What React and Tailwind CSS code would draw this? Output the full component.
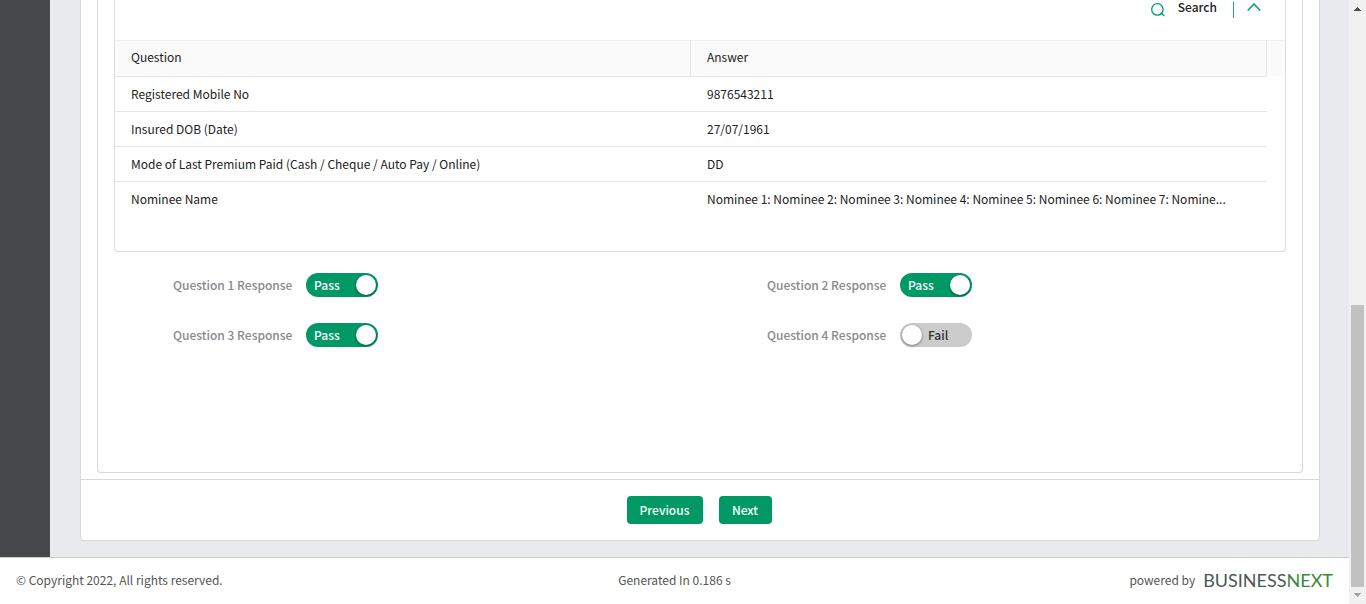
import { useState } from "react";

const rows = [
  ["Registered Mobile No", "9876543211"],
  ["Insured DOB (Date)", "27/07/1961"],
  ["Mode of Last Premium Paid (Cash / Cheque / Auto Pay / Online)", "DD"],
  [
    "Nominee Name",
    "Nominee 1: Nominee 2: Nominee 3: Nominee 4: Nominee 5: Nominee 6: Nominee 7: Nomine...",
  ],
];

const responses = [
  { id: 1, pass: true },
  { id: 2, pass: true },
  { id: 3, pass: true },
  { id: 4, pass: false },
];

function ResponseToggle({ id, pass }) {
  const [on, setOn] = useState(pass);
  const inputId = `question-${id}`;
  return (
    <div className="flex h-6 items-center gap-3 pl-[59px]">
      <label htmlFor={inputId} className="w-[121px] whitespace-nowrap font-medium text-[#8a8a8a]">
        Question {id} Response
      </label>
      <label
        className={
          on
            ? "relative flex h-6 w-[72px] cursor-pointer items-center rounded-full bg-[#009966] pl-2 font-medium text-white"
            : "relative flex h-6 w-[72px] cursor-pointer items-center rounded-full bg-[#cccccc] pl-7 font-medium text-[#333333]"
        }
      >
        <input
          id={inputId}
          type="checkbox"
          role="switch"
          checked={on}
          onChange={() => setOn(!on)}
          className="absolute inset-0 cursor-pointer appearance-none rounded-full"
        />
        <span>{on ? "Pass" : "Fail"}</span>
        <span
          className={
            on
              ? "pointer-events-none absolute top-0.5 right-0.5 size-5 rounded-full bg-white shadow-[0_1px_3px_rgba(0,0,0,0.45)]"
              : "pointer-events-none absolute top-0.5 left-0.5 size-5 rounded-full bg-white shadow-[0_1px_3px_rgba(0,0,0,0.45)]"
          }
        />
      </label>
    </div>
  );
}

function SearchBar() {
  return (
    <div className="flex h-10 items-start justify-end pr-[23px]">
      <button type="button" className="flex items-start gap-3 font-medium text-[#222222]">
        <svg className="mt-0.5 size-4" viewBox="0 0 16 16" fill="none" stroke="#009966" strokeWidth="1.3">
          <circle cx="7.4" cy="7.4" r="5.7" />
          <path d="M10.6 10.7 L14.3 13.9" />
        </svg>
        <span className="-mt-[3px]">Search</span>
      </button>
      <span className="mt-0.5 ml-4 h-4 w-px bg-[#2f9f6d]" />
      <button type="button" aria-label="Collapse" className="mt-0.5 ml-3 flex">
        <svg className="h-[10px] w-4" viewBox="0 0 16 10" fill="none" stroke="#009966" strokeWidth="1.5">
          <path d="M1.7 8.5 L8 2 L14.3 8.5" />
        </svg>
      </button>
    </div>
  );
}

function QuestionTable() {
  return (
    <section className="rounded-b border border-t-0 border-[#dcdcdc] pb-[34px]">
      <SearchBar />
      <div className="bg-[linear-gradient(#fafafa,#fafafa)] bg-[length:100%_36px] bg-no-repeat pr-[18px] shadow-[inset_0_1px_#efefef]">
        <table className="w-full table-fixed border-separate border-spacing-0 text-left text-[#222222]">
          <thead>
            <tr className="h-[37px]">
              <th className="border-r border-b border-[#e6e6e6] px-4 pb-0.5 font-normal">Question</th>
              <th className="border-r border-b border-[#e6e6e6] px-4 pb-0.5 font-normal">Answer</th>
            </tr>
          </thead>
          <tbody className="bg-white">
            {rows.map(([question, answer]) => (
              <tr key={question} className="group h-[35px]">
                <td className="truncate border-b border-[#e6e6e6] px-4 group-last:border-transparent">{question}</td>
                <td className="truncate border-b border-[#e6e6e6] px-4 group-last:border-transparent">{answer}</td>
              </tr>
            ))}
          </tbody>
        </table>
      </div>
    </section>
  );
}

function Scrollbar() {
  return (
    <div aria-hidden="true" className="flex w-[17px] shrink-0 flex-col items-center bg-[#f1f1f1] pt-[7px] pb-[7px]">
      <svg className="h-1 w-[7px] shrink-0" viewBox="0 0 7 4" fill="#505050" shapeRendering="crispEdges">
        <path d="M0 4 L3.5 0 L7 4 Z" />
      </svg>
      <div className="grow" />
      <div className="mb-[6px] h-[282px] w-[13px] bg-[#c1c1c1]" />
      <svg className="h-1 w-[7px] shrink-0" viewBox="0 0 7 4" fill="#a3a3a3" shapeRendering="crispEdges">
        <path d="M0 0 L3.5 4 L7 0 Z" />
      </svg>
    </div>
  );
}

export default function App() {
  return (
    <div className="flex min-h-screen bg-white font-['Noto_Sans_CJK_SC','Noto_Sans',sans-serif] text-[12px] leading-5">
      <div className="flex min-w-0 grow flex-col">
        <div className="flex grow">
          <aside className="w-[50px] shrink-0 bg-[#47484b]" />
          <main className="min-w-0 grow bg-[#e8eaee] pr-[29px] pb-4 pl-[30px]">
            <div className="flex h-full flex-col rounded-b border border-t-0 border-[#d8d8d8] bg-white">
              <div className="flex grow flex-col px-4 pb-1.5">
                <div className="grow rounded-b border border-t-0 border-[#d8d8d8] px-4">
                  <QuestionTable />
                  <div className="grid grid-cols-2 gap-x-4 gap-y-[26px] pt-[21px]">
                    {responses.map((item) => (
                      <ResponseToggle key={item.id} id={item.id} pass={item.pass} />
                    ))}
                  </div>
                </div>
              </div>
              <div className="flex justify-center gap-4 border-t border-[#d8d8d8] py-4 pr-0.5 font-medium text-white">
                <button type="button" className="h-7 w-[76px] rounded bg-[#009966]">
                  Previous
                </button>
                <button type="button" className="h-7 w-[53px] rounded bg-[#009966]">
                  Next
                </button>
              </div>
            </div>
          </main>
        </div>
        <footer className="grid h-[47px] grid-cols-3 items-center border-t border-[#cccccc] px-4 pb-0.5 text-[#555555]">
          <span>© Copyright 2022, All rights reserved.</span>
          <span className="text-center">Generated In 0.186 s</span>
          <span className="flex items-center justify-end gap-2">
            powered by
            <span className="font-['Lato',sans-serif] text-[18px] text-[#4c5854]">
              BUSINESS<span className="text-[#3c873c]">NEXT</span>
            </span>
          </span>
        </footer>
      </div>
      <Scrollbar />
    </div>
  );
}
